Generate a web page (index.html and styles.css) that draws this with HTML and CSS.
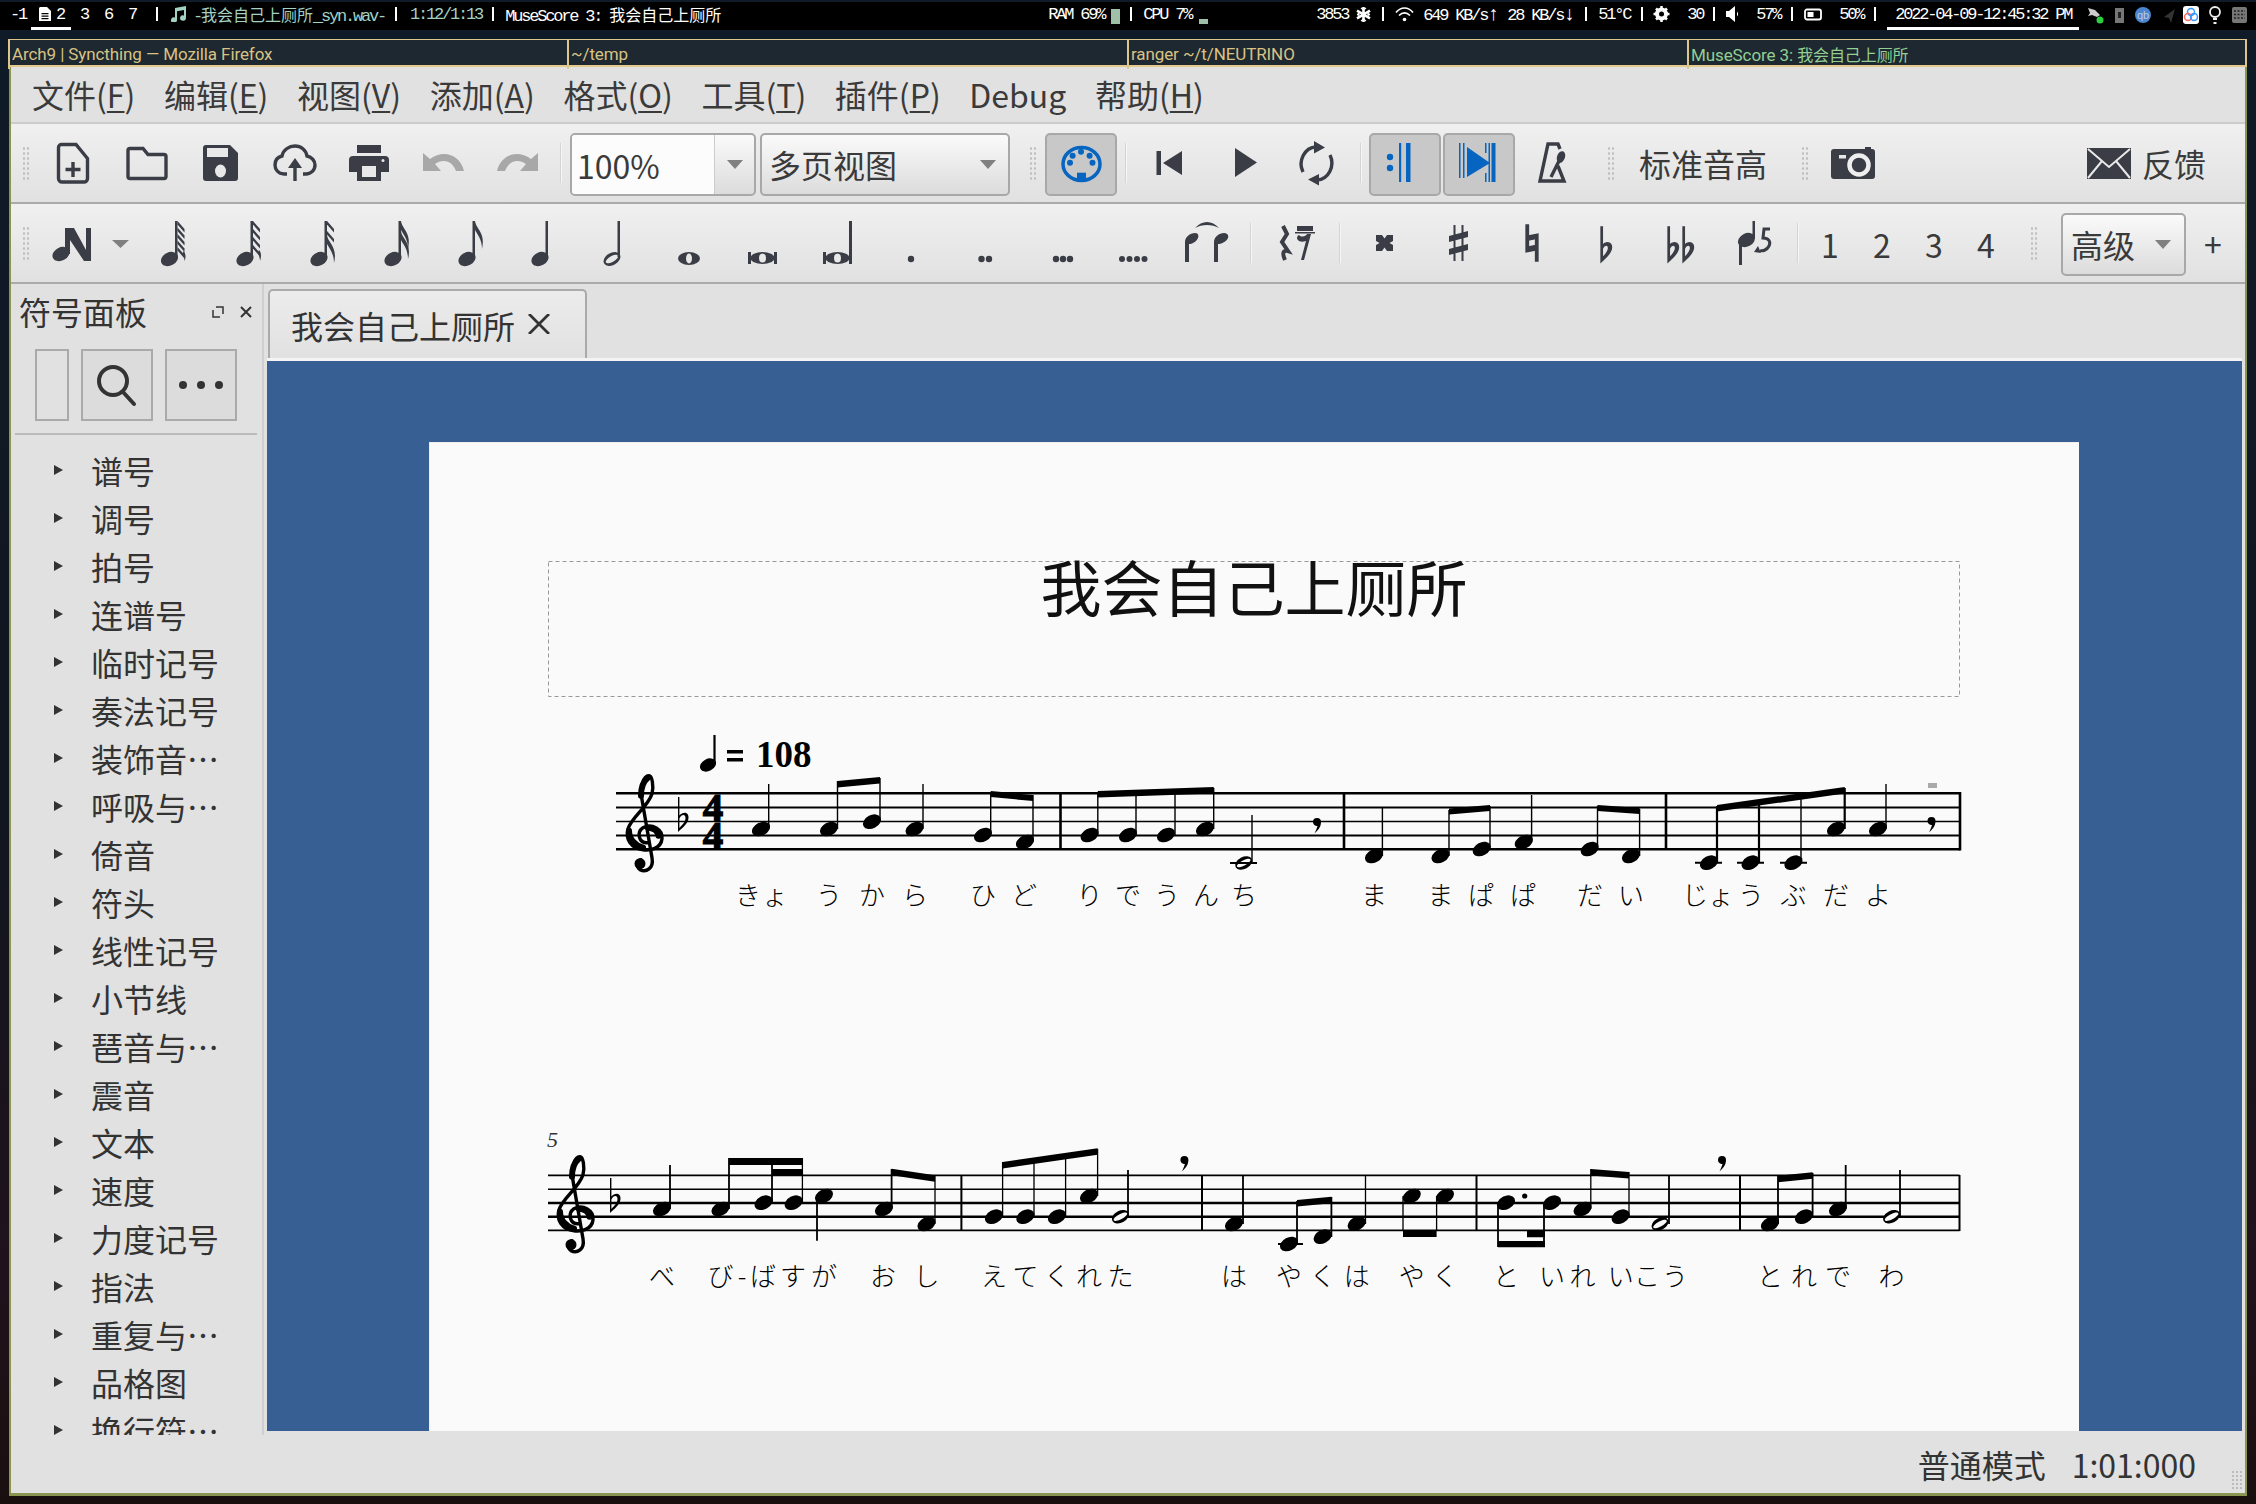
FILE: index.html
```html
<!DOCTYPE html>
<html lang="zh">
<head>
<meta charset="utf-8">
<title>MuseScore 3: 我会自己上厕所</title>
<link rel="stylesheet" href="styles.css">
</head>
<body>
<svg class="defs" aria-hidden="true">
  <defs>
    <ellipse id="h" rx="9.6" ry="6.6" transform="rotate(-28)"/>
    <g id="hh"><ellipse rx="9" ry="6" transform="rotate(-28)"/><ellipse rx="7.6" ry="2.6" transform="rotate(-28)" fill="#fafafa"/></g>
    <g id="clef" fill="none" stroke="#000" stroke-linecap="round">
      <path stroke-width="3.400" d="M2 7C-7 8-10-3-3-8C6-13 17-6 16 3C15 13 4 15-3 14C-15 13-21 3-18-7C-14-19 2-29 6-42C8-50 6-60 3-60C-3-60-6-48-4-36L6 22C8 33 0 37-6 34C-10 31-10 25-5 24"/>
      <path stroke-width="6" d="M-17-5C-17 3-11 10-3 12M-5-40C-5-48-3-54 2-58M12.500 0C12-5 7-8 2-8"/>
      <circle cx="-6" cy="28" r="5.500" fill="#000" stroke="none"/>
    </g>
    <path id="flat" d="M0 0H1.400V18.500C5 14 11 15 10.500 21C10 27 4 31 0 35ZM1.400 21.500V31C4 28 7.500 25 7.500 21C7.500 17 3.500 17 1.400 21.500Z"/>
    <path id="br" d="M-4 0A4 4 0 1 1 4 0C4 6 0 9-2.500 11.500C-1 8 0 6 .5 3.900A4 4 0 0 1-4 0Z"/>

    <ellipse id="th" rx="9" ry="6.600" transform="rotate(-28)"/>
    <path id="ts" d="M5.500 -38h2.500v36h-2.500z"/>
    <path id="tstripe" d="M8 0l7 8v3.500l-7-8z"/>
    <path id="tflag" d="M8 0C9 8 19 12 15 28C15 18 10 13 8 9Z"/>
  </defs>
</svg>

<header class="bar">
  <span>-1</span>
  <span class="dtab m5"><svg class="bi12" viewBox="0 0 12 14"><path fill="#fff" d="M1 0h7l4 4v10H0V1zM2.500 6v1.300h7V6zm0 2.500v1.300h7V8.500zm0 2.500v1.300h7V11z"/></svg><span class="m5">2</span></span>
  <span class="m9">3</span><span class="m16">6</span><span class="m16">7</span>
  <i class="pipe m20"></i>
  <svg class="bi17 m12" viewBox="0 0 17 16"><path fill="#a3d1c2" d="M5 2l11-2v12a3 2.600 0 1 1-2-2.400V4L7 5.300V14a3 2.600 0 1 1-2-2.400z"/></svg>
  <span class="teal m6">-<span class="cjk">我会自己上厕所</span>_syn.wav-</span>
  <i class="pipe tealbg m10"></i>
  <span class="teal m13">1:12/1:13</span>
  <i class="pipe m10"></i>
  <span class="m11">MuseScore 3: <span class="cjk">我会自己上厕所</span></span>

  <span class="m327">RAM 69%</span><i class="lev lev-hi m7"></i>
  <i class="pipe m10"></i>
  <span class="m11">CPU 7%</span><i class="lev lev-lo m8"></i>

  <span class="m108">3853</span>
  <svg class="bi15 m8" viewBox="0 0 15 15"><path stroke="#fff" stroke-width="2.600" d="M7.500 0v15M1 3.700l13 7.600M14 3.700L1 11.300"/><path stroke="#fff" stroke-width="1.200" fill="none" d="M5 1l2.500 2L10 1M5 14l2.500-2L10 14M1 7l2 .5-.5-3M14 7l-2 .5.5-3M1 8l2-.5-.5 3M14 8l-2-.5.5 3"/></svg>
  <i class="pipe m11"></i>
  <svg class="bi19 m11" viewBox="0 0 19 15"><path fill="none" stroke="#fff" stroke-width="1.700" d="M1 5.500C6-.5 13-.5 18 5.500M4 8.500C7.500 5 11.500 5 15 8.500"/><circle cx="9.500" cy="12.500" r="1.800" fill="#fff"/></svg>
  <span class="m9">649 KB/s<span class="arr">↑</span></span>
  <span class="m12">28 KB/s<span class="arr">↓</span></span>
  <i class="pipe m14"></i>
  <span class="m11">51°C</span>
  <i class="pipe m11"></i>
  <svg class="bi17 m10" viewBox="0 0 17 16"><circle cx="8.500" cy="8" r="5" fill="none" stroke="#fff" stroke-width="3"/><path stroke="#fff" stroke-width="2.500" d="M8.500 0v16M.5 8h16M3 2.500l11 11M14 2.500l-11 11"/><circle cx="8.500" cy="8" r="2.500" fill="#000"/></svg>
  <span class="m17">30</span>
  <i class="pipe m10"></i>
  <svg class="bi14 m11" viewBox="0 0 14 16"><path fill="#fff" d="M0 5h3l6-5v16l-6-5H0zM11 5.500c1.500 1.500 1.500 3.500 0 5z"/></svg>
  <span class="m16">57%</span>
  <i class="pipe m11"></i>
  <svg class="bi19 m11" viewBox="0 0 19 15"><rect x="1" y="2.500" width="16" height="10" rx="2" fill="none" stroke="#fff" stroke-width="1.800"/><rect x="3.500" y="5" width="6" height="5" fill="#fff"/></svg>
  <span class="m16">50%</span>
  <i class="pipe m11"></i>
  <span class="dtab date m11">2022-04-09-12:45:32 PM</span>
  <svg class="tray" viewBox="0 2 168 28">
    <path fill="#ccc" d="M5 8l7 2 5 5-3 2-5-2-4 1 2-3z"/><circle cx="17" cy="20" r="3.500" fill="#2ecc40"/>
    <rect x="32" y="8" width="9" height="15" fill="#777"/><rect x="35" y="12" width="3" height="6" fill="#222"/>
    <circle cx="60" cy="15" r="8" fill="#4a86d0"/><text class="qb" x="60" y="18.500">qb</text>
    <path fill="#333" d="M92 9l-4 14-2-5-5-1z"/>
    <rect x="100" y="6" width="16" height="18" rx="3" fill="#fff"/><circle cx="108" cy="12" r="3.500" fill="none" stroke="#39f" stroke-width="1.500"/><circle cx="105" cy="17" r="3.500" fill="none" stroke="#f66" stroke-width="1.500"/><circle cx="111" cy="17" r="3.500" fill="none" stroke="#39f" stroke-width="1.500"/>
    <circle cx="132" cy="12" r="5" fill="none" stroke="#eee" stroke-width="1.800"/><path stroke="#eee" stroke-width="2" d="M130 19h4M130.500 23h3"/>
    <rect x="149" y="7" width="15" height="16" rx="2" fill="#777"/><path stroke="#222" stroke-width="1.500" stroke-dasharray="2 1.500" d="M151 11h11M151 14.500h11M151 18h11"/>
  </svg>
</header>

<nav class="wins">
  <div class="win">Arch9 | Syncthing — Mozilla Firefox</div>
  <div class="win">~/temp</div>
  <div class="win">ranger ~/t/NEUTRINO</div>
  <div class="win cur">MuseScore 3: <span class="wincjk">我会自己上厕所</span></div>
</nav>

<main class="window">
  <div class="menu">
    <span>文件(<u>F</u>)</span><span>编辑(<u>E</u>)</span><span>视图(<u>V</u>)</span><span>添加(<u>A</u>)</span><span>格式(<u>O</u>)</span><span>工具(<u>T</u>)</span><span>插件(<u>P</u>)</span><span>Debug</span><span>帮助(<u>H</u>)</span>
  </div>

  <div class="tb">
    <i class="grip g0"></i>
    <svg class="slot" viewBox="36 124 74 78"><path class="ol" d="M62 144.500h14l11.500 14v20a3.500 3.500 0 0 1-3.500 3.500H62a3.500 3.500 0 0 1-3.500-3.500v-31a3 3 0 0 1 3.500-3zM73 162v15M65.500 169.500h15"/></svg>
    <svg class="slot" viewBox="110 124 74 78"><path class="ol" d="M130 148.500h13l5 6h16a2 2 0 0 1 2 2v20a2 2 0 0 1-2 2h-34a2 2 0 0 1-2-2v-26a2 2 0 0 1 2-2z"/></svg>
    <svg class="slot" viewBox="184 124 74 78"><path d="M206 145h24l8 8v25a3 3 0 0 1-3 3h-29a3 3 0 0 1-3-3v-30a3 3 0 0 1 3-3z"/><rect class="hole" x="207" y="148" width="21" height="9"/><ellipse class="hole" cx="220.500" cy="171" rx="5.500" ry="6.500"/></svg>
    <svg class="slot" viewBox="258 124 74 78"><path class="ol" d="M287 174h-3c-6 0-9-5-9-9 0-5 3-8 7-9 1-6 7-10 13-10s11 4 12 10c5 1 8 5 8 9 0 5-4 9-9 9h-3M295 181v-18"/><path d="M288 168l7-10 7 10z"/></svg>
    <svg class="slot" viewBox="332 124 74 78"><path d="M357 145h24v8h-24zM353 156h32a4 4 0 0 1 4 4v12h-8v9h-24v-9h-8v-12a4 4 0 0 1 4-4z"/><rect class="hole" x="362" y="166" width="14" height="11"/><circle class="hole" cx="383" cy="160.500" r="1.500"/></svg>
    <svg class="slot dim" viewBox="406 124 74 78"><path d="M423 153v18h18l-6-7c7-5 17-4 21 7h8c-4-16-20-22-34-12z"/></svg>
    <svg class="slot dim" viewBox="480 124 74 78"><path transform="translate(961 0) scale(-1 1)" d="M423 153v18h18l-6-7c7-5 17-4 21 7h8c-4-16-20-22-34-12z"/></svg>
    <i class="vsep m6"></i>
    <div class="combo cz m8"><span class="zv">100%</span><span class="zd"><i class="tri"></i></span></div>
    <div class="combo cv m4"><span class="cvt">多页视图</span><i class="tri"></i></div>
    <i class="grip m19"></i>
    <svg class="tbtn m8" viewBox="1047 135 68 59"><g class="blue"><ellipse cx="1081.500" cy="164" rx="18.500" ry="16.500" fill="none" stroke="#0565c0" stroke-width="3.500"/><circle cx="1072.600" cy="155.700" r="3"/><circle cx="1081" cy="151.700" r="3"/><circle cx="1089.600" cy="155.700" r="3"/><circle cx="1070" cy="162.700" r="3"/><circle cx="1092.500" cy="162.700" r="3"/><rect x="1077" y="172.700" width="9" height="9"/></g></svg>
    <i class="vsep m8"></i>
    <svg class="slot m5" viewBox="1132 124 74 78"><path d="M1156.500 151h4.500v24h-4.500zM1182 151v24l-19-12z"/></svg>
    <svg class="slot" viewBox="1206 124 74 78"><path d="M1235 148l22 14.500-22 14.500z"/></svg>
    <svg class="slot" viewBox="1280 124 74 78"><path class="ol" d="M1303 172A15.500 17 0 0 1 1316 147M1330 155A15.500 17 0 0 1 1317 180"/><path d="M1314 141l11 6.500-11 6zM1319 174l-11 5.500 11 6z"/></svg>
    <i class="vsep m6"></i>
    <svg class="tbtn m7" viewBox="1371 135 68 59"><g class="blue"><circle cx="1390" cy="157" r="3.200"/><circle cx="1390" cy="168" r="3.200"/><rect x="1399" y="143" width="2.200" height="39"/><rect x="1406" y="143" width="4.500" height="39"/></g></svg>
    <svg class="tbtn m2" viewBox="1445 135 68 59"><g class="blue"><path d="M1459 143h1.500v35H1459zM1463 143h1.500v35H1463zM1467 147l23 16-23 14zM1485 143h1.500v10H1485zM1485 173h1.500v9H1485zM1488.500 143h1.500v39h-1.500zM1491.500 143h4v39h-4z"/></g></svg>
    <svg class="slot m1" viewBox="1516 124 74 78"><path class="ol" d="M1558 166l6 15h-24l8-37h10l2 5M1551 177l10-20"/><ellipse cx="1561" cy="157" rx="4" ry="6" transform="rotate(20 1561 157)"/></svg>
    <i class="grip m17"></i>
    <span class="tlabel lbl">标准音高</span>
    <i class="grip m33"></i>
    <svg class="slot m7" viewBox="1816 124 74 78"><path d="M1835 149h30v-2h6v2h1a3 3 0 0 1 3 3v24a3 3 0 0 1-3 3h-38a3 3 0 0 1-3-3v-24a3 3 0 0 1 3-3z"/><circle cx="1859" cy="165" r="9.500" fill="none" stroke="#eee" stroke-width="4.500"/><rect class="hole" x="1839" y="155" width="7" height="3.500"/></svg>
    <div class="feedback">
      <svg class="mail" viewBox="0 0 44 31"><rect width="44" height="31"/><path fill="none" stroke="#e9e9e9" stroke-width="2" d="M1 1l21 18L43 1M1 30l14-17M43 30L29 13"/></svg>
      <span class="tlabel">反馈</span>
    </div>
  </div>

  <div class="tb">
    <i class="grip g0"></i>
    <svg class="slot wide" viewBox="36 204 100 78"><path d="M65 228h9l12 22v-22h5v33h-7l-14-21v14h-5z"/><use href="#th" x="61" y="254"/><path class="tri-i" d="M112 240h17l-8.500 8z"/></svg>
    <svg class="slot" viewBox="136 204 74 78"><g transform="translate(169.500 259)"><use href="#th"/><use href="#ts"/><use href="#tstripe" y="-38"/><use href="#tstripe" y="-31.500"/><use href="#tstripe" y="-25"/><use href="#tstripe" y="-18.500"/><use href="#tstripe" y="-12"/><path d="M14 -8c3 3 2 8 1 10 0-3-1-5-2-7z"/></g></svg>
    <svg class="slot" viewBox="210 204 74 78"><g transform="translate(245 259)"><use href="#th"/><use href="#ts"/><use href="#tstripe" y="-38"/><use href="#tstripe" y="-30"/><use href="#tstripe" y="-22"/><use href="#tstripe" y="-14"/><path d="M14 -9c3 3 2 8 1 11 0-3-1-5-2-8z"/></g></svg>
    <svg class="slot" viewBox="284 204 74 78"><g transform="translate(319 259)"><use href="#th"/><use href="#ts"/><use href="#tstripe" y="-38"/><use href="#tstripe" y="-28"/><use href="#tflag" y="-24"/></g></svg>
    <svg class="slot" viewBox="358 204 74 78"><g transform="translate(393 259)"><use href="#th"/><use href="#ts"/><use href="#tflag" y="-38"/><use href="#tflag" y="-28"/></g></svg>
    <svg class="slot" viewBox="432 204 74 78"><g transform="translate(467 259)"><use href="#th"/><use href="#ts"/><use href="#tflag" y="-38"/></g></svg>
    <svg class="slot" viewBox="506 204 74 78"><g transform="translate(540 259)"><use href="#th"/><use href="#ts"/></g></svg>
    <svg class="slot" viewBox="580 204 74 78"><g transform="translate(612 259)"><ellipse rx="9" ry="6.200" transform="rotate(-30)"/><ellipse class="hole" rx="7" ry="2.800" transform="rotate(-30)"/><use href="#ts"/></g></svg>
    <svg class="slot" viewBox="654 204 74 78"><ellipse cx="689" cy="258.500" rx="11" ry="6.500"/><ellipse class="hole" cx="689" cy="258.500" rx="3" ry="5"/></svg>
    <svg class="slot" viewBox="728 204 74 78"><path d="M748 252h3v12h-3zM774 252h3v12h-3z"/><ellipse cx="762.500" cy="258" rx="12" ry="6"/><ellipse class="hole" cx="762.500" cy="258" rx="3.500" ry="4.500"/></svg>
    <svg class="slot" viewBox="802 204 74 78"><path d="M823 252h3v12h-3zM849 221h3v43h-3z"/><ellipse cx="837.500" cy="258" rx="12" ry="6"/><ellipse class="hole" cx="837.500" cy="258" rx="3.500" ry="4.500"/></svg>
    <svg class="slot" viewBox="876 204 74 78"><circle cx="911" cy="259" r="3.200"/></svg>
    <svg class="slot" viewBox="950 204 74 78"><circle cx="981.500" cy="259" r="3.200"/><circle cx="989" cy="259" r="3.200"/></svg>
    <svg class="slot" viewBox="1024 204 74 78"><circle cx="1056" cy="259" r="3.200"/><circle cx="1063" cy="259" r="3.200"/><circle cx="1070" cy="259" r="3.200"/></svg>
    <svg class="slot" viewBox="1098 204 74 78"><circle cx="1122" cy="259" r="3"/><circle cx="1129.500" cy="259" r="3"/><circle cx="1137" cy="259" r="3"/><circle cx="1144.500" cy="259" r="3"/></svg>
    <svg class="slot" viewBox="1172 204 74 78"><path d="M1185 242c0-5 5-9 10-9 3 0 4 2 3 5-2 4-6 6-9 6v18h-4zM1214 242c0-5 5-9 10-9 3 0 5 2 4 5-2 4-7 6-10 6v18h-4zM1195 228c7-8 17-8 24 0-7-4-17-4-24 0z"/></svg>
    <i class="vsep m4"></i>
    <svg class="slot m8" viewBox="1260 204 74 78"><path d="M1297 226h16v5h-16zM1295 232h20v1.500h-20z"/><path class="ol qr" d="M1283 226l4 8-5 8 6 9c-3-1-7 0-3 9"/><path d="M1299 235c3 3 7 1 8-1h4l-7 26h-3l5-19c-3 1-7 1-8-1a3 3 0 0 1 1-5z"/></svg>
    <i class="vsep m5"></i>
    <svg class="slot m6" viewBox="1346 204 74 78"><path d="M1375 235h6l2.500 3.500 2.500-3.500h6v6l-3.500 2 3.500 2v6h-6l-2.500-3.500-2.500 3.500h-6v-6l3.500-2-3.500-2z"/></svg>
    <svg class="slot" viewBox="1420 204 74 78"><path d="M1452.500 225h2v36h-2zM1460.500 225h2v36h-2zM1448 236l19-5v6l-19 5zM1448 249l19-5v6l-19 5z"/></svg>
    <svg class="slot" viewBox="1494 204 74 78"><path class="bold" d="M1525 225h2.500v11l9.500-2v27h-2.500v-11l-9.500 2zM1527.500 240v7l7-1.500v-7z"/></svg>
    <svg class="slot" viewBox="1568 204 74 78"><use class="bold" href="#flat" x="1600" y="227"/></svg>
    <svg class="slot" viewBox="1642 204 74 78"><use class="bold" href="#flat" x="1667" y="227"/><use class="bold" href="#flat" x="1682" y="227"/></svg>
    <svg class="slot" viewBox="1716 204 74 78"><ellipse cx="1745.500" cy="240" rx="9" ry="6.600" transform="rotate(-28 1745.500 240)"/><path d="M1751.500 221h2.500v18h-2.500zM1738 241h3v24h-3z"/><path class="ol thin" d="M1769 229h-6l-1 9c6 0 8 4 6 8s-7 6-9 4"/><path d="M1757 246l-4 6 7 1z"/></svg>
    <i class="vsep m6"></i>
    <span class="dg m5">1</span><span class="dg">2</span><span class="dg">3</span><span class="dg">4</span>
    <i class="grip m18"></i>
    <div class="combo adv m23"><span>高级</span><i class="tri"></i></div>
    <span class="plus">+</span>
  </div>

  <div class="work">
    <aside class="palette">
      <div class="phead"><span>符号面板</span>
        <svg class="pfloat" viewBox="0 0 12 12"><path fill="none" stroke="#333" stroke-width="1.500" d="M4 1h7v7M8 11H1V4"/></svg>
        <svg class="pclose" viewBox="0 0 12 12"><path stroke="#333" stroke-width="2" d="M1 1l10 10M11 1L1 11"/></svg>
      </div>
      <div class="ptools">
        <div class="pbtn pb0"></div>
        <div class="pbtn"><svg class="psearch" viewBox="0 0 42 44"><circle cx="17" cy="18" r="14" fill="none" stroke="#333" stroke-width="4"/><path stroke="#333" stroke-width="4" stroke-linecap="round" d="M27 29l11 12"/></svg></div>
        <div class="pbtn pdots"><i></i><i></i><i></i></div>
      </div>
      <ul class="tree">
        <li>谱号</li><li>调号</li><li>拍号</li><li>连谱号</li><li>临时记号</li><li>奏法记号</li><li>装饰音…</li><li>呼吸与…</li><li>倚音</li><li>符头</li><li>线性记号</li><li>小节线</li><li>琶音与…</li><li>震音</li><li>文本</li><li>速度</li><li>力度记号</li><li>指法</li><li>重复与…</li><li>品格图</li><li>换行符…</li>
      </ul>
    </aside>
    <section class="doc">
      <div class="tabs"><div class="tab"><span>我会自己上厕所</span><svg class="tabx" viewBox="0 0 22 20"><path stroke="#333" stroke-width="2.800" d="M1 0l20 20M21 0L1 20"/></svg></div></div>
      <div class="canvas">
        <div class="page">
          <svg class="score" viewBox="430 443 1649 988">
            <rect x="548.500" y="561.500" width="1411" height="135" class="frame"/>
            <text class="ttl" x="1254" y="612">我会自己上厕所</text>

            <!-- system 1 -->
            <g stroke="#000">
              <path stroke-width="2.600" d="M616 793.300H1960M616 849.300H1960"/>
              <path stroke-width="1.800" d="M616 807.500H1960M616 835.500H1960"/>
              <path stroke-width="1.300" d="M616 821.500H1960"/>
              <path stroke-width="2.600" d="M1060.500 793V849M1344 793V849M1666 793V849M1960 792V850.500"/>
              <path stroke-width="1.400" d="M768.700 829V784M837.500 829V781M880 822V778M923 829V784M990.700 835V792M1033 842V795M1097.800 835V792M1136 835V790M1175 835V789M1213.700 829V788M1252 863V815M1382.400 856V808M1449 856V810M1490 849V806M1531.600 842V795M1597.500 849V806M1639.600 856V809M1801 863V799M1886 829V784"/>
              <path stroke-width="2.200" d="M1717 863V806M1759 863V802M1844.700 829V788M714.500 763V735"/>
              <path stroke-width="2" d="M1695 862.700H1722M1737 862.700H1764M1780 862.700H1807"/>
            </g>
            <path d="M837.500 781L880 777V783.500L837.500 787.500ZM990.700 791L1033 795V801L990.700 797ZM1097.800 791L1213.700 787V793.500L1097.800 797.500ZM1449 808.500L1490 805V811L1449 814.500ZM1597.500 805L1639.600 808V814L1597.500 811ZM1717 805L1844.700 787V793.500L1717 811.500Z"/>
            <use href="#clef" x="646" y="835.700"/>
            <use href="#flat" x="678" y="797"/>
            <text class="tsig" x="713 713" y="820.500 849">44</text>
            <ellipse cx="708" cy="765" rx="8.500" ry="6" transform="rotate(-28 708 765)"/>
            <path d="M727 750h16v3.500h-16zM727 758h16v3.500h-16z"/>
            <text class="tempo" x="756" y="767">108</text>
            <use href="#h" x="761" y="829"/><use href="#h" x="829" y="829"/><use href="#h" x="872" y="821.700"/><use href="#h" x="914.600" y="829"/><use href="#h" x="983" y="835"/><use href="#h" x="1025" y="842"/>
            <use href="#h" x="1089.600" y="835"/><use href="#h" x="1128" y="835"/><use href="#h" x="1166" y="835"/><use href="#h" x="1205" y="829"/><use href="#hh" x="1243.700" y="863"/>
            <path stroke="#000" stroke-width="2" d="M1230 863H1257"/>
            <use href="#br" x="1317" y="822"/>
            <use href="#h" x="1374" y="856"/><use href="#h" x="1440.500" y="856"/><use href="#h" x="1481.700" y="849"/><use href="#h" x="1523.800" y="842"/><use href="#h" x="1589.700" y="849"/><use href="#h" x="1631" y="856"/>
            <use href="#h" x="1709" y="862.700"/><use href="#h" x="1750.600" y="862.700"/><use href="#h" x="1793.500" y="862.700"/><use href="#h" x="1836" y="829"/><use href="#h" x="1878" y="829"/>
            <use href="#br" x="1931.500" y="821"/>
            <rect x="1928" y="783" width="9" height="5" fill="#aaa"/>
            <text class="ly" x="748 775 829 872 915 983 1024 1089.600 1128 1167 1206 1244 1374 1440.500 1481 1523 1590 1631 1695 1721 1751 1793.500 1836 1878" y="905">きょうからひどりでうんちままぱぱだいじょうぶだよ</text>

            <!-- system 2 -->
            <text class="mno" x="547" y="1147">5</text>
            <g stroke="#000">
              <path stroke-width="1.600" d="M548 1175.400H1959.500M548 1189.300H1959.500M548 1230.400H1959.500"/>
              <path stroke-width="2.400" d="M548 1203H1959.500M548 1216.800H1959.500"/>
              <path stroke-width="2" d="M961.400 1175V1231M1202 1175V1231M1476.500 1175V1231M1740 1175V1231M1959.500 1175V1231"/>
              <path stroke-width="1.300" d="M802.400 1203V1158M935 1224V1175M1002.600 1217V1162M1034 1217V1160M1065.600 1217V1154M1097.600 1196V1149M1590.800 1209V1169M1629 1217V1172M1365.500 1224V1175M1403 1196V1231M1436.600 1196V1231"/>
              <path stroke-width="1.800" d="M670 1209V1165M729 1209V1158M772 1203V1158M817 1196V1240.700M891.600 1209V1169M1128 1217V1170M1243 1224V1175.700M1297 1244V1201M1331.400 1237V1197M1498 1203V1247M1544 1203V1247M1669 1224V1175.300M1778 1224V1176M1812.600 1217V1173M1845.700 1209V1165M1900 1217V1170"/>
              <path stroke-width="2" d="M1278 1244H1303"/>
            </g>
            <path d="M729 1158H802.400V1165H729ZM772 1169H802.400V1176H772ZM891.600 1168.700L935 1175.300V1181.800L891.600 1175.200ZM1002.600 1162L1097.600 1148.300V1154.800L1002.600 1168.500ZM1297 1200L1331.400 1196.700V1203.200L1297 1206.500ZM1403 1230.700H1436.600V1237H1403ZM1498 1241H1545V1247.300H1498ZM1527 1231H1545V1237.300H1527ZM1590.800 1169L1629 1172V1178.500L1590.800 1175.500ZM1778 1175.700L1812.600 1172.300V1178.800L1778 1182.200Z"/>
            <use href="#clef" x="577" y="1216.700"/>
            <use href="#flat" x="610" y="1178"/>
            <use href="#h" x="662" y="1209"/><use href="#h" x="720.500" y="1209"/><use href="#h" x="763.600" y="1202.700"/><use href="#h" x="793.700" y="1202.700"/><use href="#h" x="824" y="1196"/><use href="#h" x="884" y="1209"/><use href="#h" x="926.500" y="1224"/>
            <use href="#h" x="994" y="1216.700"/><use href="#h" x="1025.400" y="1216.700"/><use href="#h" x="1057" y="1216.700"/><use href="#h" x="1089" y="1196"/><use href="#hh" x="1120.400" y="1216.700"/>
            <use href="#br" x="1184.400" y="1160"/>
            <use href="#h" x="1234" y="1224"/><use href="#h" x="1289" y="1244"/><use href="#h" x="1322.700" y="1236.700"/><use href="#h" x="1356.700" y="1223.700"/><use href="#h" x="1411.800" y="1196"/><use href="#h" x="1445" y="1196"/>
            <use href="#h" x="1506" y="1202.700"/><circle cx="1524.700" cy="1196" r="2.600"/><use href="#h" x="1552" y="1202.700"/><use href="#h" x="1582.600" y="1209"/><use href="#h" x="1620.700" y="1216.700"/><use href="#hh" x="1660" y="1224"/>
            <use href="#br" x="1722" y="1160"/>
            <use href="#h" x="1770" y="1224"/><use href="#h" x="1804" y="1216.700"/><use href="#h" x="1838" y="1209"/><use href="#hh" x="1891.600" y="1216.700"/>
            <text class="ly" x="662 720.500 742 763 793 824 883 926.500 994 1025.400 1057 1089 1120.400 1234 1289 1322.700 1356.700 1411.800 1445 1506 1552 1582.600 1620.700 1647 1675 1770 1804 1838 1891.600" y="1286">べび-ばすがおしえてくれたはやくはやくといれいこうとれでわ</text>
          </svg>
        </div>
      </div>
    </section>
  </div>

  <footer class="status"><span>普通模式</span><span class="pos">1:01:000</span><i class="sgrip"></i></footer>
</main>
</body>
</html>
```

FILE: styles.css
```css
* { box-sizing: border-box; }
html, body { margin: 0; padding: 0; }
body {
  width: 2256px; height: 1504px; overflow: hidden; padding-top: 2px;
  background: linear-gradient(180deg, #0f1b28 0%, #12161f 55%, #20121c 85%, #1a0f0f 100%);
  font-family: "Noto Sans CJK SC", "Noto Sans", sans-serif;
  color: #333;
}
.defs { display: block; width: 0; height: 0; }
i { display: block; font-style: normal; }
u { text-underline-offset: 3px; text-decoration-thickness: 2px; }

/* status bar */
.bar {
  height: 28px; background: #000; color: #fff;
  display: flex; align-items: center; padding: 0 0 4px 10px;
  font: 17px "Liberation Mono", "Noto Sans CJK SC", monospace;
  letter-spacing: -2.200px; white-space: pre; font-kerning: none;
}
.bar > span, .bar span { flex: none; }
.cjk { letter-spacing: 0; font-family: "Noto Sans CJK SC", sans-serif; font-size: 16px; }
.arr { font-size: 20px; letter-spacing: -4px; }
.teal { color: #a3d1c2; }
.tealbg { background: #a3d1c2; }
.pipe { width: 2px; height: 14px; background: #fff; flex: none; }
.lev { width: 9px; flex: none; background: #9fbfa8; align-self: flex-end; margin-bottom: 2px; }
.lev-hi { height: 15px; }
.lev-lo { height: 5px; }
.dtab {
  display: flex; align-items: center; width: 40px; height: 28px; padding: 0 0 1px 8px;
  border-bottom: 3px solid #fff; align-self: flex-end; margin-bottom: -4px;
}
.date { width: 192px; justify-content: center; padding-left: 0; }
.bi12 { width: 12px; height: 14px; flex: none; }
.bi14 { width: 14px; height: 16px; flex: none; }
.bi15 { width: 15px; height: 15px; flex: none; }
.bi17 { width: 17px; height: 16px; flex: none; }
.bi19 { width: 19px; height: 15px; flex: none; }
.tray { width: 168px; height: 28px; flex: none; margin-left: 4px; align-self: flex-start; }
.qb { font: 11px "Liberation Sans", sans-serif; fill: #bcd; text-anchor: middle; letter-spacing: 0; }

.m1 { margin-left: 1px; } .m2 { margin-left: 2px; } .m4 { margin-left: 4px; } .m5 { margin-left: 5px; }
.m6 { margin-left: 6px; } .m7 { margin-left: 7px; } .m8 { margin-left: 8px; } .m9 { margin-left: 9px; }
.m10 { margin-left: 10px; } .m11 { margin-left: 11px; } .m12 { margin-left: 12px; } .m13 { margin-left: 13px; }
.m14 { margin-left: 14px; } .m16 { margin-left: 16px; } .m17 { margin-left: 17px; } .m18 { margin-left: 18px; }
.m19 { margin-left: 19px; } .m20 { margin-left: 20px; } .m23 { margin-left: 23px; } .m33 { margin-left: 33px; }
.m108 { margin-left: 108px; } .m327 { margin-left: 327px; }

/* window list */
.wins {
  margin: 9px 0 0 8px; width: 2239px; height: 28px;
  display: grid; grid-template-columns: 559px 560px 560px 560px;
  background: #1d2830; border-top: 1px solid #dcc68c; border-bottom: 2px solid #e3c98a; border-right: 2px solid #dcc68c;
}
.win {
  border-left: 2px solid #dcc68c; padding-left: 2px; color: #d9c285;
  font: 17px/28px "Roboto", sans-serif; letter-spacing: -.1px; white-space: nowrap;
}
.wincjk { font-family: "Noto Sans CJK SC", sans-serif; font-size: 16px; }
.cur { color: #93ce93; }

/* application window */
.window {
  margin-left: 9px; width: 2238px; height: 1429px;
  border-left: 2px solid #8a9650; border-right: 2px solid #8a9650; border-bottom: 3px solid #8a9650;
  background: #e1e1e1; display: flex; flex-direction: column;
}
.menu {
  height: 57px; flex: none; border-bottom: 2px solid #ccc; padding: 0 0 2px 21px;
  display: flex; align-items: center; gap: 28.600px;
  font-size: 32px; line-height: 52px; color: #3a3a3a; white-space: nowrap;
}
.tb {
  height: 80px; flex: none; display: flex; align-items: center; border-bottom: 2px solid #aaa;
  background: linear-gradient(180deg, #f0f0f0 0%, #e1e1e1 100%);
  padding-left: 11px; white-space: nowrap;
}
.slot { width: 74px; height: 78px; flex: none; fill: #3a3d45; }
.wide { width: 100px; }
.dim { fill: #a8a8a8; }
.ol { fill: none; stroke: #3a3d45; stroke-width: 3.400px; }
.thin { stroke-width: 3px; }
.qr { stroke-width: 4px; }
.bold { stroke: #3a3d45; stroke-width: 1.300px; }
.hole { fill: #e8e8e8; }
.tri-i { fill: #808080; }
.grip {
  width: 8px; height: 34px; flex: none;
  background-image: radial-gradient(circle, #bdbdbd 1px, transparent 1.300px);
  background-size: 4px 5px;
}
.g0 { margin-right: 6px; }
.vsep { width: 2px; height: 40px; flex: none; background: #d4d4d4; border-right: 1px solid #f6f6f6; }
.combo {
  height: 63px; flex: none; margin-top: 2px; border: 2px solid #a8a8a8; border-radius: 5px;
  display: flex; align-items: center; font-size: 32px; color: #3a3a3a;
  background: linear-gradient(180deg, #fafafa 0%, #dcdcdc 100%);
}
.tri { width: 0; height: 0; flex: none; border-left: 8px solid transparent; border-right: 8px solid transparent; border-top: 9px solid #808080; }
.cz { width: 186px; overflow: hidden; }
.zv { width: 143px; height: 100%; background: #fcfcfc; padding-left: 5px; line-height: 60px; border-right: 1px solid #ccc; font-size: 32px; }
.zd { flex: 1; display: flex; align-items: center; justify-content: center; }
.cv { width: 250px; padding-left: 7px; justify-content: space-between; padding-right: 12px; }
.adv { width: 125px; padding-left: 8px; justify-content: space-between; padding-right: 13px; }
.tbtn {
  width: 72px; height: 63px; flex: none; margin-top: 2px; background: #c8c8c8;
  border: 2px solid #a8a8a8; border-radius: 5px;
}
.blue { fill: #0565c0; }
.tlabel { font-size: 32px; color: #3a3a3a; line-height: 40px; flex: none; }
.lbl { margin-left: 24px; margin-right: 1px; }
.feedback { margin-left: auto; padding-right: 39px; display: flex; align-items: center; gap: 11px; }
.mail { width: 44px; height: 31px; fill: #3a3d45; flex: none; }
.dg { width: 52px; flex: none; text-align: center; font-size: 32px; line-height: 40px; color: #3a3a3a; margin-top: 2px; }
.plus { width: 54px; flex: none; text-align: center; font-size: 32px; line-height: 40px; color: #3a3a3a; }

/* palette + document */
.work { flex: none; height: 1151px; display: flex; overflow: hidden; }
.palette { width: 253px; flex: none; border-right: 2px solid #cfcfcf; overflow: hidden; }
.phead { height: 65px; display: flex; align-items: center; padding: 0 10px 12px 8px; font-size: 32px; color: #333; }
.pfloat { width: 12px; height: 12px; margin-left: auto; margin-top: 2px; }
.pclose { width: 12px; height: 12px; margin-left: 16px; margin-top: 2px; }
.ptools { display: flex; gap: 12px; padding-left: 24px; }
.pbtn {
  width: 72px; height: 72px; border: 2px solid #aaa; background: #dcdcdc;
  display: flex; align-items: center; justify-content: center; gap: 10px;
}
.pb0 { width: 34px; background: #e1e1e1; }
.psearch { width: 42px; height: 44px; }
.pdots i { width: 8px; height: 8px; border-radius: 50%; background: #333; }
.tree {
  list-style: none; margin: 12px 0 0 4px; padding: 11px 0 0 0; width: 242px; border-top: 2px solid #bbb;
}
.tree li {
  height: 48px; line-height: 48px; padding-left: 76px; font-size: 32px; color: #333; position: relative; white-space: nowrap;
}
.tree li::before {
  content: ""; position: absolute; left: 39px; top: 19px;
  border-left: 9px solid #333; border-top: 5px solid transparent; border-bottom: 5px solid transparent;
}
.doc { flex: 1; min-width: 0; padding: 0 3px 4px 3px; display: flex; flex-direction: column; }
.tabs { height: 77px; flex: none; padding: 5px 0 0 1px; border-bottom: 3px solid #f4f4f4; }
.tab {
  width: 319px; height: 69px; border: 2px solid #aaa; border-bottom: 0; border-radius: 5px 5px 0 0;
  background: linear-gradient(180deg, #ececec 0%, #e1e1e1 100%);
  display: flex; align-items: center; padding-left: 21px; font-size: 32px; color: #333;
}
.tabx { width: 22px; height: 20px; margin-left: 13px; margin-top: -2px; }
.canvas { flex: 1; min-height: 0; background: #375f93; padding: 81px 0 0 162px; overflow: hidden; }
.page { width: 1650px; height: 990px; background: #fafafa; border-left: 1px solid #eee; border-top: 1px solid #eee; }
.score { display: block; width: 1649px; height: 988px; }
.frame { fill: none; stroke: #999; stroke-width: 1; stroke-dasharray: 4 3; }
.ttl { font: 61px "Noto Sans CJK SC", sans-serif; fill: #111; text-anchor: middle; }
.tsig { font: bold 41px "Liberation Serif", serif; text-anchor: middle; stroke: #000; stroke-width: 1.200px; }
.tempo { font: bold 37px "Liberation Serif", serif; }
.mno { font: italic 22px "Liberation Serif", serif; fill: #333; }
.ly { font: 300 26px "Noto Sans CJK JP", sans-serif; fill: #000; text-anchor: middle; }

.status {
  flex: 1; display: flex; padding: 9px 49px 0 0; justify-content: flex-end; font-size: 32px; line-height: 40px; color: #333; position: relative;
}
.pos { margin-left: 26px; }
.sgrip {
  position: absolute; right: 2px; bottom: 3px; width: 12px; height: 20px;
  background-image: radial-gradient(circle, #bbb 1px, transparent 1.300px); background-size: 4px 4px;
}
```
